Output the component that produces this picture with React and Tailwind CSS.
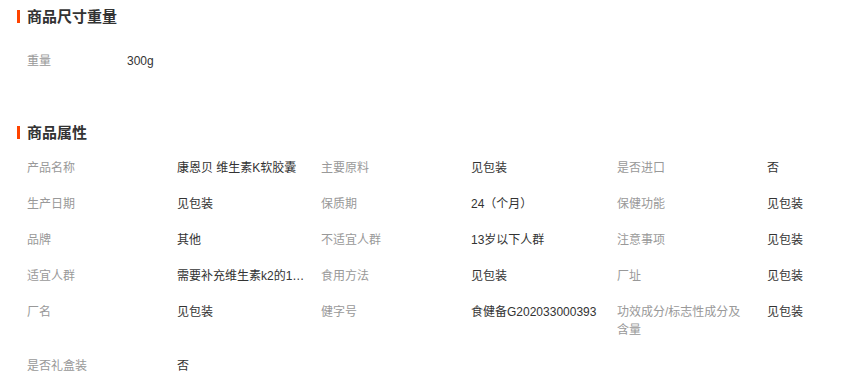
import React from "react";

const sizeRows = [[["重量", "300g"]]];

const attrRows = [
  [
    ["产品名称", "康恩贝 维生素K软胶囊"],
    ["主要原料", "见包装"],
    ["是否进口", "否"],
  ],
  [
    ["生产日期", "见包装"],
    ["保质期", "24（个月）"],
    ["保健功能", "见包装"],
  ],
  [
    ["品牌", "其他"],
    ["不适宜人群", "13岁以下人群"],
    ["注意事项", "见包装"],
  ],
  [
    ["适宜人群", "需要补充维生素k2的16岁以上人群"],
    ["食用方法", "见包装"],
    ["厂址", "见包装"],
  ],
  [
    ["厂名", "见包装"],
    ["健字号", "食健备G202033000393"],
    ["功效成分/标志性成分及含量", "见包装"],
  ],
  [["是否礼盒装", "否"]],
];

// value column widths per column (the 3 columns are not exactly even)
const valueWidths = ["w-[144px]", "w-[146px]", "w-[80px]"];

// section title with the little orange bar on the left
function SectionTitle({ children }) {
  return (
    <div className="flex h-8 items-center">
      <span className="h-[13px] w-[3px] bg-[#ff4400]" />
      <h3 className="pl-[7px] text-[15px] font-bold leading-none text-[#333]">
        {children}
      </h3>
    </div>
  );
}

function AttrTable({ rows, labelWidth = "w-[150px]" }) {
  return (
    <div className="pl-[10px]">
      {rows.map((row, i) => (
        <div key={i} className="flex py-[9px] text-[12px] leading-[18px]">
          {row.map(([label, value], j) => (
            <div key={label} className="flex">
              <div className={`${labelWidth} shrink-0 pr-[18px] text-[#999]`}>
                {label}
              </div>
              <div className={`${valueWidths[j]} shrink-0 overflow-hidden pr-4`}>
                <div className="truncate text-[#333]">{value}</div>
              </div>
            </div>
          ))}
        </div>
      ))}
    </div>
  );
}

export default function App() {
  return (
    <div
      className="min-h-[387px] w-[856px] overflow-hidden bg-white pl-[17px]"
      style={{ fontFamily: '"Liberation Sans", "Noto Sans CJK SC", sans-serif' }}
    >
      <SectionTitle>商品尺寸重量</SectionTitle>
      <div className="mt-[11px]">
        <AttrTable rows={sizeRows} labelWidth="w-[100px]" />
      </div>

      <div className="mt-[37px]">
        <SectionTitle>商品属性</SectionTitle>
        <div className="mt-[2px]">
          <AttrTable rows={attrRows} />
        </div>
      </div>
    </div>
  );
}
